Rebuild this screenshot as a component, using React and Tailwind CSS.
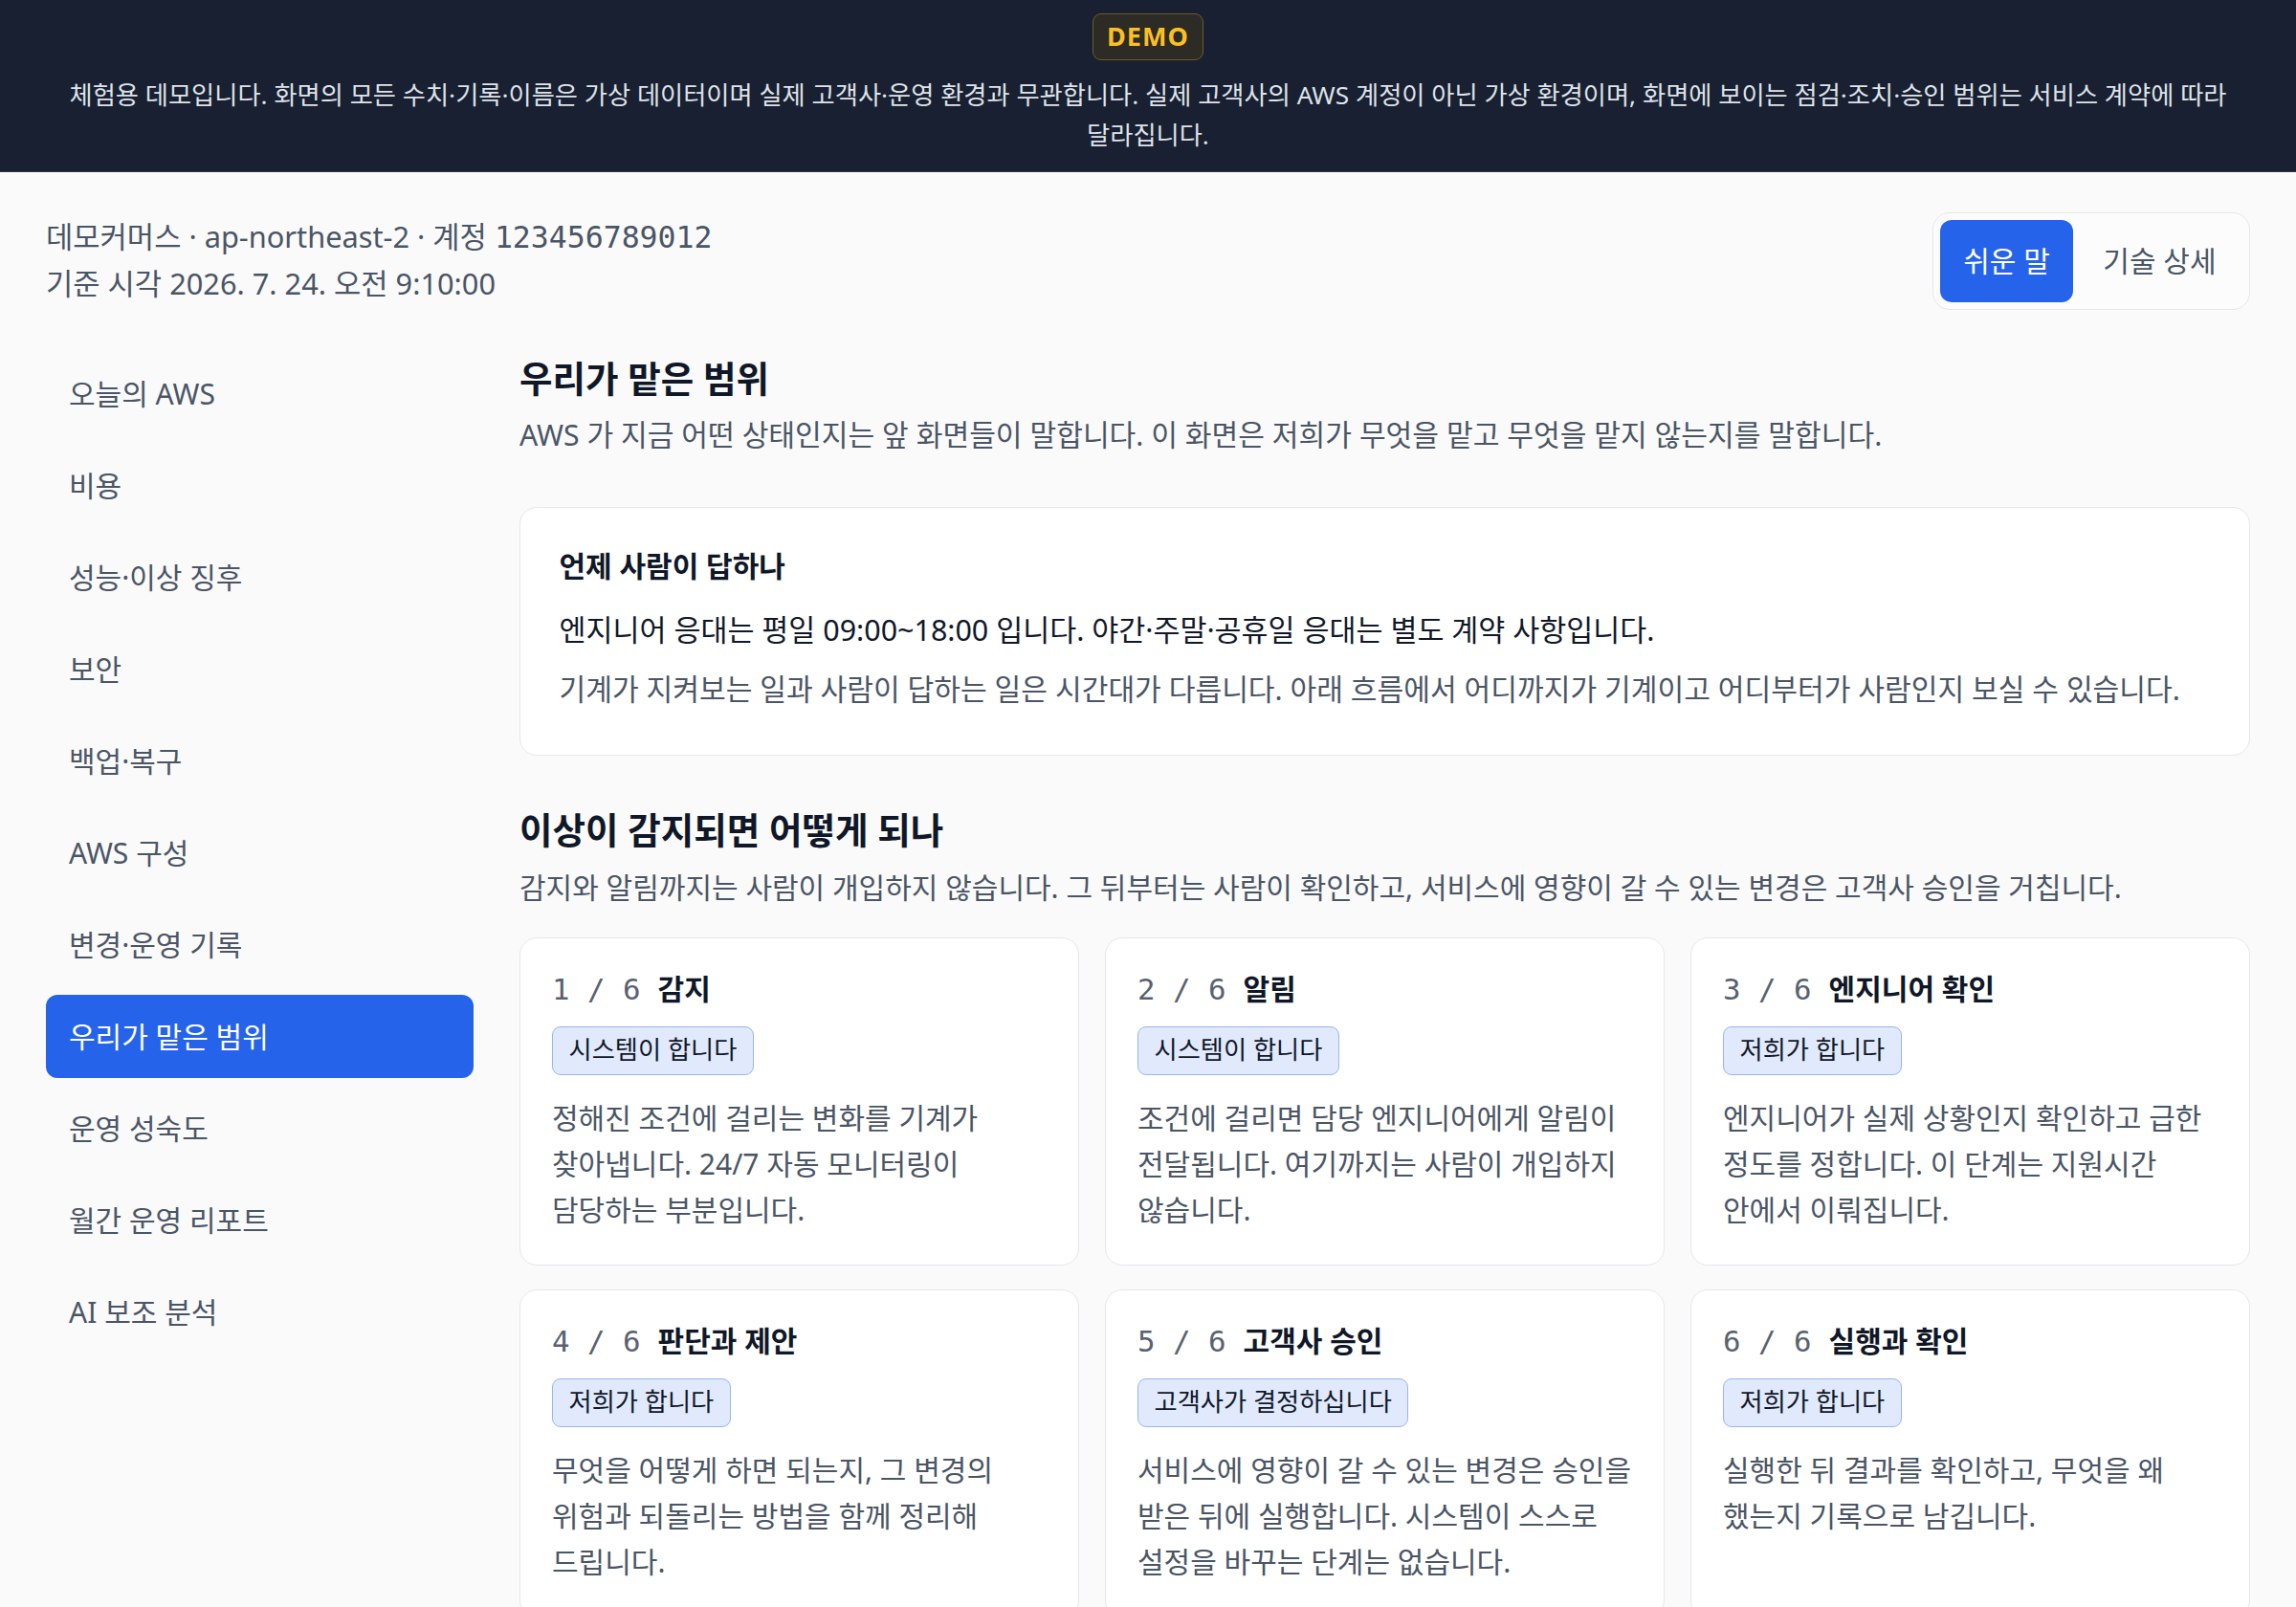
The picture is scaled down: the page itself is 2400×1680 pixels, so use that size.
import React, { useState } from "react";

const NAV_ITEMS = [
    "오늘의 AWS",
    "비용",
    "성능·이상 징후",
    "보안",
    "백업·복구",
    "AWS 구성",
    "변경·운영 기록",
    "우리가 맡은 범위",
    "운영 성숙도",
    "월간 운영 리포트",
    "AI 보조 분석",
];

const STEPS = [
    {
        title: "감지",
        who: "시스템이 합니다",
        desc: "정해진 조건에 걸리는 변화를 기계가 찾아냅니다. 24/7 자동 모니터링이 담당하는 부분입니다.",
    },
    {
        title: "알림",
        who: "시스템이 합니다",
        desc: "조건에 걸리면 담당 엔지니어에게 알림이 전달됩니다. 여기까지는 사람이 개입하지 않습니다.",
    },
    {
        title: "엔지니어 확인",
        who: "저희가 합니다",
        desc: "엔지니어가 실제 상황인지 확인하고 급한 정도를 정합니다. 이 단계는 지원시간 안에서 이뤄집니다.",
    },
    {
        title: "판단과 제안",
        who: "저희가 합니다",
        desc: "무엇을 어떻게 하면 되는지, 그 변경의 위험과 되돌리는 방법을 함께 정리해 드립니다.",
    },
    {
        title: "고객사 승인",
        who: "고객사가 결정하십니다",
        desc: "서비스에 영향이 갈 수 있는 변경은 승인을 받은 뒤에 실행합니다. 시스템이 스스로 설정을 바꾸는 단계는 없습니다.",
    },
    {
        title: "실행과 확인",
        who: "저희가 합니다",
        desc: "실행한 뒤 결과를 확인하고, 무엇을 왜 했는지 기록으로 남깁니다.",
    },
];

function StepCard({ index, step }) {
    return (
        <div className="bg-white border border-[#e4e7ec] rounded-xl pt-[21px] px-[22px] pb-[22px]">
            <div className="flex items-center leading-7">
                <span className="font-['DejaVu_Sans_Mono',monospace] text-[20.5px] text-[#596170] whitespace-pre">
                    {`${index + 1} / ${STEPS.length}`}
                </span>
                <span className="ml-3 text-[20px] font-bold text-gray-900">{step.title}</span>
            </div>
            <div className="mt-3">
                <span className="inline-flex items-center h-[34px] px-[11px] rounded-md border border-[#98b5f2] bg-[#e1e9fd] text-[17.5px] text-gray-900">
                    {step.who}
                </span>
            </div>
            <p className="mt-[14px] text-[20px] leading-8 text-gray-600">{step.desc}</p>
        </div>
    );
}

export default function App() {
    const [mode, setMode] = useState("easy");
    const [active, setActive] = useState("우리가 맡은 범위");

    return (
        <div className="min-h-screen bg-[#fafafa] font-['Noto_Sans','Noto_Sans_CJK_KR',sans-serif] break-keep [zoom:1.5]">
            {/* demo notice */}
            <div className="bg-[#182031] border-b border-[#2f3746] flex flex-col items-center pt-[9px] pb-[11px] px-6">
                <span className="h-[33px] flex items-center px-[9px] rounded-md border border-[#6e5b26] bg-[#2c2b26] text-[#fbbf24] text-[18px] font-bold tracking-[0.04em]">
                    DEMO
                </span>
                <p className="mt-[10px] text-center text-[17.5px] leading-7 text-[#dfe3ea]">
                    체험용 데모입니다. 화면의 모든 수치·기록·이름은 가상 데이터이며 실제 고객사·운영 환경과 무관합니다. 실제 고객사의 AWS 계정이 아닌 가상 환경이며, 화면에 보이는 점검·조치·승인 범위는 서비스 계약에 따라 달라집니다.
                </p>
            </div>

            <div className="px-8 pt-7">
                <div className="flex justify-between items-start">
                    <div className="pt-px text-[20.5px] leading-8 text-gray-600">
                        <div>
                            데모커머스 · ap-northeast-2 · 계정{" "}
                            <span className="font-['DejaVu_Sans_Mono',monospace] text-[21px]">123456789012</span>
                        </div>
                        <div>기준 시각 2026. 7. 24. 오전 9:10:00</div>
                    </div>
                    <div className="flex gap-[5px] p-[5px] rounded-xl border border-[#e4e7ec] bg-[#fcfcfd]">
                        <button
                            onClick={() => setMode("easy")}
                            className={`h-[57px] px-4 rounded-lg text-[20px] ${mode === "easy" ? "bg-[#2563eb] text-white" : "text-gray-600"}`}
                        >
                            쉬운 말
                        </button>
                        <button
                            onClick={() => setMode("tech")}
                            className={`h-[57px] pl-4 pr-[18px] rounded-lg text-[20px] ${mode === "tech" ? "bg-[#2563eb] text-white" : "text-gray-600"}`}
                        >
                            기술 상세
                        </button>
                    </div>
                </div>

                <div className="mt-[29px] grid grid-cols-[298px_1fr] gap-8">
                    <nav className="flex flex-col gap-[6px]">
                        {NAV_ITEMS.map((item) => (
                            <button
                                key={item}
                                onClick={() => setActive(item)}
                                className={`h-[58px] px-4 rounded-lg text-left text-[20px] ${
                                    active === item ? "bg-[#2563eb] text-white" : "text-gray-600"
                                }`}
                            >
                                {item}
                            </button>
                        ))}
                    </nav>

                    <main className="pt-[3px]">
                        <h2 className="text-[25px] leading-8 font-bold text-gray-900">우리가 맡은 범위</h2>
                        <p className="mt-2 text-[20.1px] leading-[30px] text-gray-600">
                            AWS 가 지금 어떤 상태인지는 앞 화면들이 말합니다. 이 화면은 저희가 무엇을 맡고 무엇을 맡지 않는지를 말합니다.
                        </p>

                        <div className="mt-[35px] bg-white border border-[#e4e7ec] rounded-xl px-[27px] pt-[27px] pb-[31px]">
                            <h3 className="text-[20px] leading-7 font-bold text-gray-900">언제 사람이 답하나</h3>
                            <p className="mt-[16px] text-[20.3px] leading-7 text-gray-900">
                                엔지니어 응대는 평일 09:00~18:00 입니다. 야간·주말·공휴일 응대는 별도 계약 사항입니다.
                            </p>
                            <p className="mt-[14px] text-[20.1px] leading-7 text-gray-600">
                                기계가 지켜보는 일과 사람이 답하는 일은 시간대가 다릅니다. 아래 흐름에서 어디까지가 기계이고 어디부터가 사람인지 보실 수 있습니다.
                            </p>
                        </div>

                        <h2 className="mt-[36px] text-[25px] leading-8 font-bold text-gray-900">이상이 감지되면 어떻게 되나</h2>
                        <p className="mt-[9px] text-[20px] leading-[30px] text-gray-600">
                            감지와 알림까지는 사람이 개입하지 않습니다. 그 뒤부터는 사람이 확인하고, 서비스에 영향이 갈 수 있는 변경은 고객사 승인을 거칩니다.
                        </p>

                        <div className="mt-5 grid grid-cols-3 gap-x-[18px] gap-y-[17px]">
                            {STEPS.map((step, i) => (
                                <StepCard key={step.title} index={i} step={step} />
                            ))}
                        </div>
                    </main>
                </div>
            </div>
        </div>
    );
}
